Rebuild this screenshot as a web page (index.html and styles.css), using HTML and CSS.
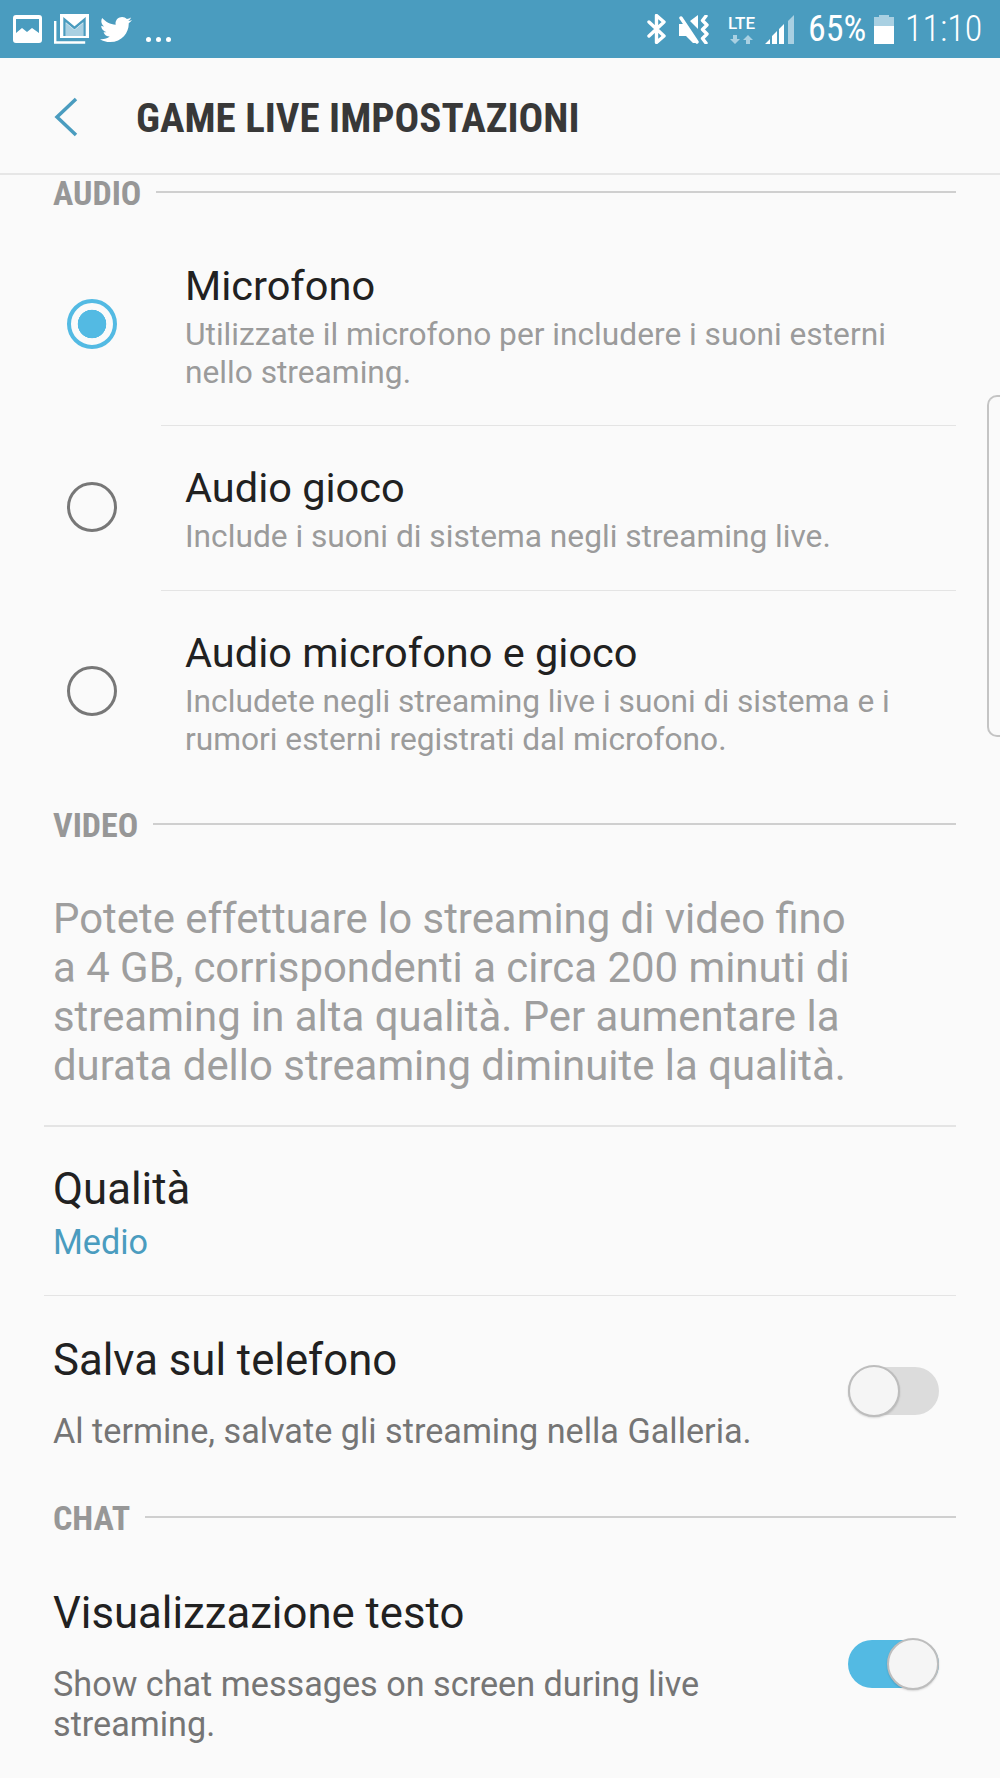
FILE: index.html
```html
<!DOCTYPE html>
<html lang="it">
<head>
    <meta charset="UTF-8">
    <title>Game Live impostazioni</title>
    <link rel="stylesheet" href="styles.css">
</head>
<body>
    <!-- Status bar -->
    <div class="status-bar">
        <div class="status-left">
            <svg class="icon-gallery" viewBox="0 0 29 28"><path fill="#fff" fill-rule="evenodd" d="M3 0h23a3 3 0 0 1 3 3v22a3 3 0 0 1-3 3H3a3 3 0 0 1-3-3V3a3 3 0 0 1 3-3zM3 4v14l6-5 5 4 5-4 7 5V4z"/></svg>
            <svg class="icon-mail" viewBox="0 0 35 30"><path fill="none" stroke="#fff" stroke-width="2.400" d="M1.200 7v21.500h30"/><path fill="#fff" d="M6 0h29v24H6z"/><path fill="#a9d0e2" d="M12 22V9l8.500 7L29 9v13z"/><path fill="none" stroke="#4a9cbf" stroke-width="2.400" d="M10.500 22V5.500l10 8.500 10-8.500V22"/></svg>
            <svg class="icon-twitter" viewBox="0 0 24 24" preserveAspectRatio="none"><path fill="#fff" d="M23.954 4.569c-.885.389-1.83.654-2.825.775 1.014-.611 1.794-1.574 2.163-2.723-.951.555-2.005.959-3.127 1.184-.896-.959-2.173-1.559-3.591-1.559-2.717 0-4.92 2.203-4.92 4.917 0 .39.045.765.127 1.124C7.691 8.094 4.066 6.13 1.64 3.161c-.427.722-.666 1.561-.666 2.475 0 1.71.87 3.213 2.188 4.096-.807-.026-1.566-.248-2.228-.616v.061c0 2.385 1.693 4.374 3.946 4.827-.413.111-.849.171-1.296.171-.314 0-.615-.03-.916-.086.631 1.953 2.445 3.377 4.604 3.417-1.68 1.319-3.809 2.105-6.102 2.105-.39 0-.779-.023-1.17-.067 2.189 1.394 4.768 2.209 7.557 2.209 9.054 0 13.999-7.496 13.999-13.986 0-.209 0-.42-.015-.63.961-.689 1.8-1.56 2.46-2.548l-.047-.02z"/></svg>
            <div class="more-dots"><span></span><span></span><span></span></div>
        </div>
        <div class="status-right">
            <svg class="icon-bt" viewBox="0 0 19 30"><path fill="none" stroke="#fff" stroke-width="3.400" stroke-linecap="round" stroke-linejoin="round" d="M2 8l15 14-7.500 6.500v-27L17 8 2 22"/></svg>
            <svg class="icon-mute" viewBox="0 0 31 29"><path fill="#fff" d="M0 9h5l12 17v2h-3l-7-7H0zM11 6l8-6v14z"/><path stroke="#4a9cbf" stroke-width="2" d="M6 1l16 24"/><path stroke="#fff" stroke-width="3.400" stroke-linecap="round" d="M2 3l16 24"/><path fill="none" stroke="#fff" stroke-width="3.400" stroke-linecap="round" stroke-linejoin="round" d="M27 1l-3.500 4.500 4.500 4.500-4.500 4.500 4.500 4.500-4.500 4.500 3.500 4.500"/></svg>
            <div class="lte">
                <span class="lte-text">LTE</span>
                <svg class="icon-arrows" viewBox="0 0 24 9"><path fill="#a9d0e2" d="M3 0h4v4h3L5 9 0 4h3zM16 5h-3l5-5 5 5h-3v4h-4z"/></svg>
            </div>
            <svg class="icon-signal" viewBox="0 0 30 29"><path fill="#fff" d="M0 29l5-5v5zM7 29v-8l5-5v13zM14 29V14l5-5v20z"/><path fill="#a9d0e2" d="M23 29V6l6-6v29z"/></svg>
            <span class="battery-text">65%</span>
            <svg class="icon-battery" viewBox="0 0 20 29"><path fill="#a9d0e2" d="M5 0h10v2h5v10H0V2h5z"/><path fill="#fff" d="M0 11h20v18H0z"/></svg>
            <span class="clock">11:10</span>
        </div>
    </div>

    <!-- Header -->
    <header class="app-header">
        <svg class="icon-back" viewBox="0 0 24 40"><path fill="none" stroke="#4a9cbf" stroke-width="3.500" d="M22 2L3 20l19 18"/></svg>
        <h1 class="app-title">GAME LIVE IMPOSTAZIONI</h1>
    </header>

    <main>
        <!-- Audio -->
        <div class="section-label"><span>AUDIO</span></div>
        <div class="option-list">
            <div class="option option-first">
                <span class="radio radio-on"></span>
                <div>
                    <div class="option-title">Microfono</div>
                    <div class="option-desc">Utilizzate il microfono per includere i suoni esterni<br>nello streaming.</div>
                </div>
            </div>
            <div class="divider-inset"></div>
            <div class="option">
                <span class="radio"></span>
                <div>
                    <div class="option-title">Audio gioco</div>
                    <div class="option-desc">Include i suoni di sistema negli streaming live.</div>
                </div>
            </div>
            <div class="divider-inset"></div>
            <div class="option">
                <span class="radio"></span>
                <div>
                    <div class="option-title">Audio microfono e gioco</div>
                    <div class="option-desc">Includete negli streaming live i suoni di sistema e i<br>rumori esterni registrati dal microfono.</div>
                </div>
            </div>
        </div>

        <!-- Video -->
        <div class="section-label"><span>VIDEO</span></div>
        <p class="video-note">Potete effettuare lo streaming di video fino<br>a 4 GB, corrispondenti a circa 200 minuti di<br>streaming in alta qualità. Per aumentare la<br>durata dello streaming diminuite la qualità.</p>
        <div class="divider divider-thick"></div>
        <div class="quality">
            <div class="row-title">Qualità</div>
            <div class="quality-value">Medio</div>
        </div>
        <div class="divider"></div>
        <div class="setting setting-save">
            <div>
                <div class="row-title">Salva sul telefono</div>
                <div class="setting-desc">Al termine, salvate gli streaming nella Galleria.</div>
            </div>
            <span class="toggle"><span class="knob"></span></span>
        </div>

        <!-- Chat -->
        <div class="section-label"><span>CHAT</span></div>
        <div class="setting setting-chat">
            <div>
                <div class="row-title">Visualizzazione testo</div>
                <div class="setting-desc setting-desc-wrap">Show chat messages on screen during live<br>streaming.</div>
            </div>
            <span class="toggle toggle-on"><span class="knob"></span></span>
        </div>
    </main>

    <!-- Edge panel handle -->
    <div class="edge-handle"></div>
</body>
</html>
```

FILE: styles.css
```css
/* General */
html, body {
    height: 100%;
}

body {
    margin: 0;
    height: 1778px;
    overflow: hidden;
    position: relative;
    background: #fafafa;
    font-family: Roboto, sans-serif;
    color: #212121;
}

svg {
    display: block;
    flex: none;
}

/* Status bar */
.status-bar {
    height: 58px;
    background: #4a9cbf;
    display: flex;
    justify-content: space-between;
    align-items: center;
    color: #fff;
}

.status-left {
    display: flex;
    align-items: center;
    padding-left: 13px;
}

.icon-gallery {
    width: 29px;
    height: 28px;
}

.icon-mail {
    width: 35px;
    height: 30px;
    margin-left: 12px;
}

.icon-twitter {
    width: 32px;
    height: 31px;
    margin-left: 11px;
}

.more-dots {
    display: flex;
    gap: 5px;
    margin: 20px 0 0 14px;
}

.more-dots span {
    width: 5px;
    height: 5px;
    border-radius: 50%;
    background: #fff;
}

.status-right {
    display: flex;
    align-items: center;
    padding-right: 17px;
}

.icon-bt {
    width: 19px;
    height: 30px;
}

.icon-mute {
    width: 31px;
    height: 29px;
    margin-left: 13px;
}

.lte {
    width: 31px;
    margin-left: 16px;
    display: flex;
    flex-direction: column;
    align-items: center;
}

.lte-text {
    font-size: 17px;
    line-height: 17px;
    font-weight: 500;
}

.icon-arrows {
    width: 24px;
    height: 9px;
    margin-top: 3px;
}

.icon-signal {
    width: 30px;
    height: 29px;
    margin-left: 8px;
}

.battery-text {
    font-size: 36px;
    font-stretch: 80%;
    width: 58px;
    margin-left: 13px;
    white-space: nowrap;
}

.icon-battery {
    width: 20px;
    height: 29px;
    margin-left: 8px;
}

.clock {
    font-size: 36px;
    font-stretch: 85%;
    font-weight: 300;
    margin-left: 11px;
    width: 78px;
    white-space: nowrap;
}

/* Header */
.app-header {
    height: 115px;
    border-bottom: 2px solid #e6e6e6;
    display: flex;
    align-items: center;
    padding-left: 54px;
}

.icon-back {
    width: 24px;
    height: 40px;
    margin-top: 2px;
}

.app-title {
    margin: 4px 0 0 58px;
    font-size: 41px;
    line-height: 48px;
    font-weight: 700;
    font-stretch: 75%;
    color: #383838;
    white-space: nowrap;
}

/* Section labels */
.section-label {
    height: 36px;
    margin-right: 44px;
    padding-left: 53px;
    display: flex;
    align-items: center;
    gap: 15px;
    font-size: 34px;
    font-weight: 700;
    font-stretch: 75%;
    color: #979797;
}

.section-label::after {
    content: "";
    flex: 1;
    height: 2px;
    margin-top: -3px;
    background: #cfcfcf;
}

/* Radio options */
.option-list {
    margin: 13px 0 14px;
}

.option {
    display: flex;
    align-items: center;
    padding: 40px 0 34px 67px;
}

.option-first {
    padding-bottom: 33px;
}

.radio {
    box-sizing: border-box;
    width: 50px;
    height: 50px;
    margin: 0 68px 8px 0;
    flex: none;
    border: 3px solid #777;
    border-radius: 50%;
}

.radio-on {
    border: 4px solid #53bae3;
    background: radial-gradient(circle, #53bae3 0 14px, transparent 14.6px);
}

.option-title {
    font-size: 41.500px;
    line-height: 44px;
    white-space: nowrap;
}

.option-desc {
    margin-top: 8px;
    font-size: 31.700px;
    line-height: 38px;
    color: #9b9b9b;
    white-space: nowrap;
}

.divider-inset {
    height: 1px;
    margin: 0 44px 0 161px;
    background: #e4e4e4;
}

.row-title {
    font-size: 43.700px;
    line-height: 44px;
    white-space: nowrap;
}

/* Video */
.video-note {
    margin: 51px 0 0;
    padding: 0 53px 35px;
    font-size: 41.900px;
    line-height: 49px;
    color: #9e9e9e;
    white-space: nowrap;
}

.divider {
    height: 1px;
    margin: 0 44px;
    background: #e4e4e4;
}

.divider-thick {
    height: 2px;
}

.quality {
    padding: 40px 53px 34px;
}

.quality-value {
    margin-top: 12px;
    font-size: 34.200px;
    line-height: 38px;
    color: #4a9cbf;
}

/* Toggle rows */
.setting {
    display: flex;
    justify-content: space-between;
    align-items: center;
    padding: 0 61px 0 53px;
}

.setting-save {
    padding-top: 42px;
    padding-bottom: 50px;
}

.setting-save .toggle {
    margin-bottom: 6px;
}

.setting-chat {
    padding-top: 55px;
}

.setting-desc {
    margin-top: 30px;
    font-size: 34.200px;
    line-height: 38px;
    color: #757575;
    white-space: nowrap;
}

.setting-desc-wrap {
    margin-top: 29px;
    line-height: 40px;
}

.toggle {
    position: relative;
    flex: none;
    width: 91px;
    height: 48px;
    margin-bottom: 8px;
    border-radius: 24px;
    background: #dcdcdc;
}

.toggle-on {
    background: #53bae3;
}

.knob {
    position: absolute;
    box-sizing: border-box;
    top: -2px;
    left: 0;
    width: 52px;
    height: 52px;
    border: 2px solid #bdbdbd;
    border-radius: 50%;
    background: #f5f5f5;
    box-shadow: 0 1px 2px rgba(0, 0, 0, 0.15);
}

.toggle-on .knob {
    left: 39px;
}

/* Edge panel handle */
.edge-handle {
    position: absolute;
    top: 395px;
    right: 0;
    width: 11px;
    height: 338px;
    border: 2px solid #c4c4c4;
    border-right: none;
    border-radius: 10px 0 0 10px;
}
```
